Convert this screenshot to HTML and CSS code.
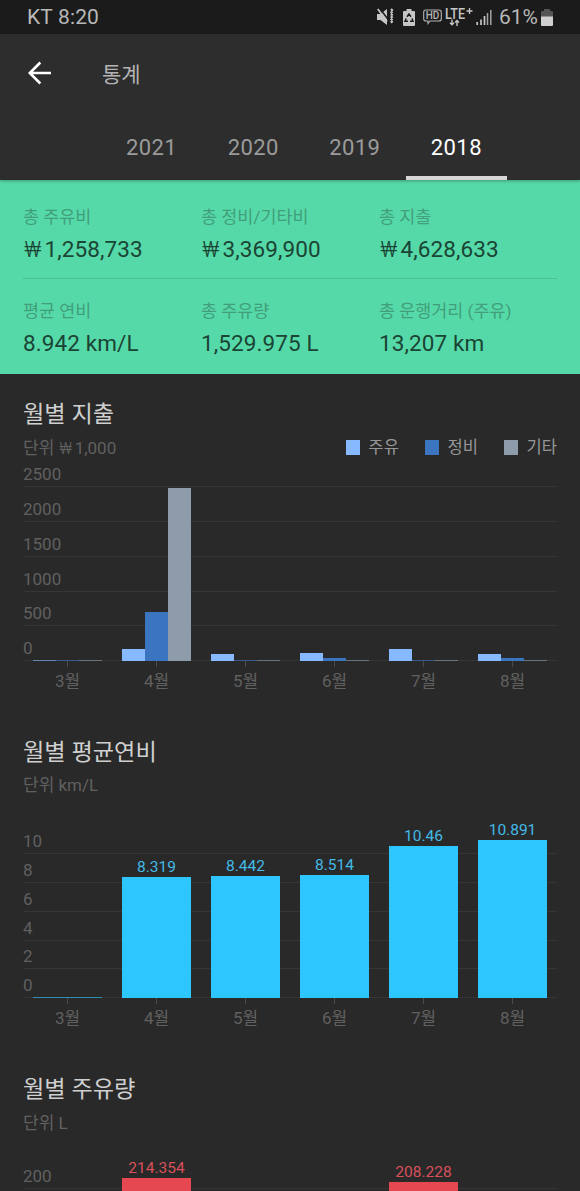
FILE: index.html
```html
<!DOCTYPE html>
<html lang="ko">
<head>
  <meta charset="UTF-8">
  <title>통계</title>
  <link rel="stylesheet" href="styles.css">
</head>
<body>

  <div class="status">
    <span class="carrier">KT 8:20</span>
    <div class="status-icons">
      <!-- mute / vibrate -->
      <svg class="ic-mute" width="18" height="18" viewBox="0 0 18 18">
        <path d="M0 6h3.500L10 1v16l-6.500-5H0z" fill="#c6c6c6"/>
        <path d="M2.500 0l9 12" stroke="#1b1b1b" stroke-width="1.500"/>
        <path d="M.8 1l9.200 12.500" stroke="#c6c6c6" stroke-width="1.800"/>
        <path d="M15.500 1l-1.600 2.300 1.600 2.300-1.600 2.300 1.600 2.300-1.600 2.300 1.600 2.500" fill="none" stroke="#c6c6c6" stroke-width="2.400" stroke-dasharray="2.200 .7"/>
      </svg>
      <!-- battery saver -->
      <svg class="ic-saver" width="12" height="17" viewBox="0 0 12 17">
        <path d="M3.500 0h5v2H11q1 0 1 1v13q0 1-1 1H1q-1 0-1-1V3q0-1 1-1h2.500z" fill="#c6c6c6"/>
        <path d="M4 7.800L6 5l2 2.800M9 9.500l1 2.800H7M5 12.300H2l1.200-2.800" fill="none" stroke="#1b1b1b" stroke-width="1.500"/>
      </svg>
      <!-- HD voice -->
      <svg class="ic-hd" width="19" height="16" viewBox="0 0 19 16">
        <path d="M3 1h13q2.300 0 2.300 2.300v6.400q0 2.300-2.300 2.300H7l-2 2.500V12H3Q.7 12 .7 9.700V3.300Q.7 1 3 1z" fill="none" stroke="#b4b4b4" stroke-width="1.100"/>
        <text x="9.500" y="10.200" text-anchor="middle">HD</text>
      </svg>
      <!-- LTE+ with data arrows -->
      <svg class="ic-lte" width="28" height="20" viewBox="0 0 28 20">
        <text x="0" y="11.500" textLength="20" lengthAdjust="spacingAndGlyphs">LTE</text>
        <path d="M21.500 4h6M24.500 1v6" stroke="#c6c6c6" stroke-width="1.300"/>
        <path d="M7 12.500v5M5 15.700l2 2 2-2M12 19v-5M10 15.500l2-2 2 2" fill="none" stroke="#c6c6c6" stroke-width="1.400"/>
      </svg>
      <!-- signal -->
      <svg class="ic-signal" width="16" height="17" viewBox="0 0 16 17">
        <path d="M1.200 13v3M5 10.500V16M8.500 7v9" stroke="#c6c6c6" stroke-width="1.700"/>
        <path d="M11.500 4v12M14.800 1v15" stroke="#a2a2a2" stroke-width="1.500"/>
      </svg>
      <span class="percent">61%</span>
      <svg class="ic-battery" width="12" height="17" viewBox="0 0 12 17">
        <path d="M3 0h6v2h2q1 0 1 1v5H0V3q0-1 1-1h2z" fill="#555"/>
        <path d="M0 7.500h12V16q0 1-1 1H1q-1 0-1-1z" fill="#d0d0d0"/>
      </svg>
    </div>
  </div>

  <header>
    <div class="toolbar">
      <svg width="24" height="24" viewBox="0 0 24 24">
        <path d="M23 12H2.500M12.300 1.500L1.800 12l10.500 10.500" fill="none" stroke="#fff" stroke-width="2.600"/>
      </svg>
      <h1>통계</h1>
    </div>
    <nav class="tabs">
      <span class="tab">2021</span>
      <span class="tab">2020</span>
      <span class="tab">2019</span>
      <span class="tab active">2018</span>
    </nav>
  </header>

  <div class="summary">
    <div class="summary-row">
      <div><span>총 주유비</span><b><u>₩</u>1,258,733</b></div>
      <div><span>총 정비/기타비</span><b><u>₩</u>3,369,900</b></div>
      <div><span>총 지출</span><b><u>₩</u>4,628,633</b></div>
    </div>
    <div class="summary-row">
      <div><span>평균 연비</span><b>8.942 km/L</b></div>
      <div><span>총 주유량</span><b>1,529.975 L</b></div>
      <div><span>총 운행거리 (주유)</span><b>13,207 km</b></div>
    </div>
  </div>

  <!-- 월별 지출 -->
  <section class="expense">
    <h2>월별 지출</h2>
    <div class="sub">
      <span class="unit">단위 <u>₩</u>1,000</span>
      <div class="legend">
        <span><i class="fuel"></i>주유</span>
        <span><i class="repair"></i>정비</span>
        <span><i class="etc"></i>기타</span>
      </div>
    </div>
    <div class="plot">
      <div class="lines">
        <p>2500</p><p>2000</p><p>1500</p><p>1000</p><p>500</p><p>0</p>
      </div>
      <div class="bars">
        <div class="group"><i class="fuel zero"></i><i class="repair zero"></i><i class="etc zero"></i></div>
        <div class="group"><i class="fuel" style="--v:175"></i><i class="repair" style="--v:700"></i><i class="etc" style="--v:2490"></i></div>
        <div class="group"><i class="fuel" style="--v:102"></i><i class="repair zero"></i><i class="etc zero"></i></div>
        <div class="group"><i class="fuel" style="--v:112"></i><i class="repair" style="--v:48"></i><i class="etc zero"></i></div>
        <div class="group"><i class="fuel" style="--v:175"></i><i class="repair zero"></i><i class="etc zero"></i></div>
        <div class="group"><i class="fuel" style="--v:102"></i><i class="repair" style="--v:48"></i><i class="etc zero"></i></div>
      </div>
    </div>
    <div class="months">
      <span>3월</span><span>4월</span><span>5월</span><span>6월</span><span>7월</span><span>8월</span>
    </div>
  </section>

  <!-- 월별 평균연비 -->
  <section class="mileage">
    <h2>월별 평균연비</h2>
    <div class="sub"><span class="unit">단위 km/L</span></div>
    <div class="plot">
      <div class="lines">
        <p>10</p><p>8</p><p>6</p><p>4</p><p>2</p><p>0</p>
      </div>
      <div class="bars">
        <div class="group"><i class="zero"></i></div>
        <div class="group"><em>8.319</em><i style="--v:8.319"></i></div>
        <div class="group"><em>8.442</em><i style="--v:8.442"></i></div>
        <div class="group"><em>8.514</em><i style="--v:8.514"></i></div>
        <div class="group"><em>10.46</em><i style="--v:10.46"></i></div>
        <div class="group"><em>10.891</em><i style="--v:10.891"></i></div>
      </div>
    </div>
    <div class="months">
      <span>3월</span><span>4월</span><span>5월</span><span>6월</span><span>7월</span><span>8월</span>
    </div>
  </section>

  <!-- 월별 주유량 -->
  <section class="volume">
    <h2>월별 주유량</h2>
    <div class="sub"><span class="unit">단위 L</span></div>
    <div class="plot">
      <div class="lines">
        <p>200</p><p></p><p></p><p></p><p></p>
      </div>
      <div class="bars">
        <div class="group"></div>
        <div class="group"><em>214.354</em><i style="--v:214.354"></i></div>
        <div class="group"></div>
        <div class="group"></div>
        <div class="group"><em>208.228</em><i style="--v:208.228"></i></div>
        <div class="group"></div>
      </div>
    </div>
  </section>

</body>
</html>
```

FILE: styles.css
```css
* {
  box-sizing: border-box;
}

html {
  overflow: hidden;
}

body {
  margin: 0;
  height: 1191px;
  overflow: hidden;
  background: #292929;
  color: #606060;
  font-family: Roboto, "Noto Sans CJK KR", sans-serif;
}

h1, h2, p {
  margin: 0;
  font-weight: 400;
}

i, em, b {
  font-style: normal;
  font-weight: 400;
}

/* won sign */
u {
  margin: 0 .14em 0 .05em;
  font-weight: 300;
  text-decoration: none;
}

svg {
  display: block;
  flex: none;
}

/* status bar */
.status {
  display: flex;
  justify-content: space-between;
  height: 34px;
  padding: 0 27px;
  background: #1b1b1b;
  color: #b8b8b8;
  font-size: 21px;
  line-height: 35px;
}

.carrier {
  letter-spacing: .15px;
}

.status-icons {
  display: flex;
  align-items: center;
}

.ic-mute { margin-right: 8px; }
.ic-saver { margin-right: 8px; }
.ic-hd { margin-right: 3px; }
.ic-lte { margin-right: 3px; }
.ic-signal { margin-right: 7px; }
.percent { margin-right: 3px; }

.ic-hd text {
  font-size: 10px;
  font-weight: 500;
  fill: #b4b4b4;
}

.ic-lte text {
  font-size: 14px;
  font-weight: 500;
  fill: #c6c6c6;
}

/* header */
header {
  position: relative;
  height: 146px;
  background: #2d2d2d;
  box-shadow: 0 1px 3px rgba(0, 0, 0, .3);
}

.toolbar {
  display: flex;
  align-items: center;
  height: 78px;
  padding-left: 28px;
}

.toolbar h1 {
  margin-left: 50px;
  font-size: 21px;
  color: #b4b4b4;
}

.tabs {
  display: flex;
  height: 68px;
  padding-left: 100.8px;
}

.tab {
  width: 101.6px;
  color: #9b9b9b;
  font-size: 22px;
  line-height: 71px;
  letter-spacing: .4px;
  text-align: center;
}

.tab.active {
  color: #fff;
  border-bottom: 4px solid #d6d6d6;
}

/* summary */
.summary {
  height: 194px;
  padding: 5px 23px 0;
  background: #56d9a8;
}

.summary-row {
  display: flex;
  height: 94px;
  padding-top: 20px;
}

.summary-row:first-child {
  border-bottom: 1px solid #4abf94;
}

.summary-row div {
  width: 178px;
  white-space: nowrap;
}

.summary-row span {
  display: block;
  color: #419f7b;
  font-size: 17.4px;
  line-height: 25px;
}

.summary-row b {
  display: block;
  height: 38px;
  color: #1a4434;
  font-size: 22.5px;
  line-height: 38px;
  letter-spacing: .1px;
}

/* charts */
section {
  height: 337.5px;
  padding: 24px 23px 0;
}

h2 {
  color: #cfcfcf;
  font-size: 23.2px;
  line-height: 32px;
}

.sub {
  display: flex;
  justify-content: space-between;
  height: 24px;
  margin-top: 5.5px;
  font-size: 17px;
  line-height: 24px;
}

.legend {
  display: flex;
  gap: 26px;
  color: #969696;
  font-size: 16.6px;
}

.legend span {
  display: flex;
  align-items: center;
}

.legend i {
  width: 14.5px;
  height: 14.5px;
  margin-right: 8px;
}

.fuel { background: #86b9ff; }
.repair { background: #3b75c0; }
.etc { background: #8e9bab; }

.plot {
  display: grid;
  height: 201.4px;
}

.lines,
.bars {
  grid-area: 1 / 1;
  display: flex;
  min-height: 0;
}

.lines {
  flex-direction: column;
  justify-content: flex-end;
}

.lines p {
  display: flex;
  flex: none;
  align-items: flex-end;
  height: var(--step);
  border-bottom: 1px solid #363636;
  font-size: 17px;
  line-height: 23px;
}

.lines p:first-child {
  height: 24px;
}

.group {
  display: flex;
  align-items: flex-end;
  justify-content: center;
  width: 89px;
  padding: 0 10px;
}

.group i {
  flex: 1;
  height: calc(var(--v) * var(--px));
}

.group i.zero {
  height: 1px;
  opacity: .6;
}

.expense {
  --step: 34.7px;
  --px: .0694px;
}

.mileage {
  --step: 28.95px;
  --px: 14.54px;
  --bar: #2dc6ff;
  --value: #43b9e6;
}

.volume {
  --step: 36.8px;
  --px: .738px;
  --bar: #e64852;
  --value: #d9505a;
}

.mileage .group,
.volume .group {
  flex-direction: column;
  align-items: stretch;
  justify-content: flex-end;
}

.mileage .group i,
.volume .group i {
  flex: none;
  background: var(--bar);
}

.group em {
  color: var(--value);
  font-size: 15.5px;
  line-height: 20px;
  text-align: center;
}

.months {
  display: flex;
}

.months span {
  width: 89px;
  font-size: 17px;
  line-height: 29px;
  text-align: center;
}

.months span::before {
  content: "";
  display: block;
  width: 1px;
  height: 6px;
  margin: 0 auto;
  background: #4a4a4a;
}
```
